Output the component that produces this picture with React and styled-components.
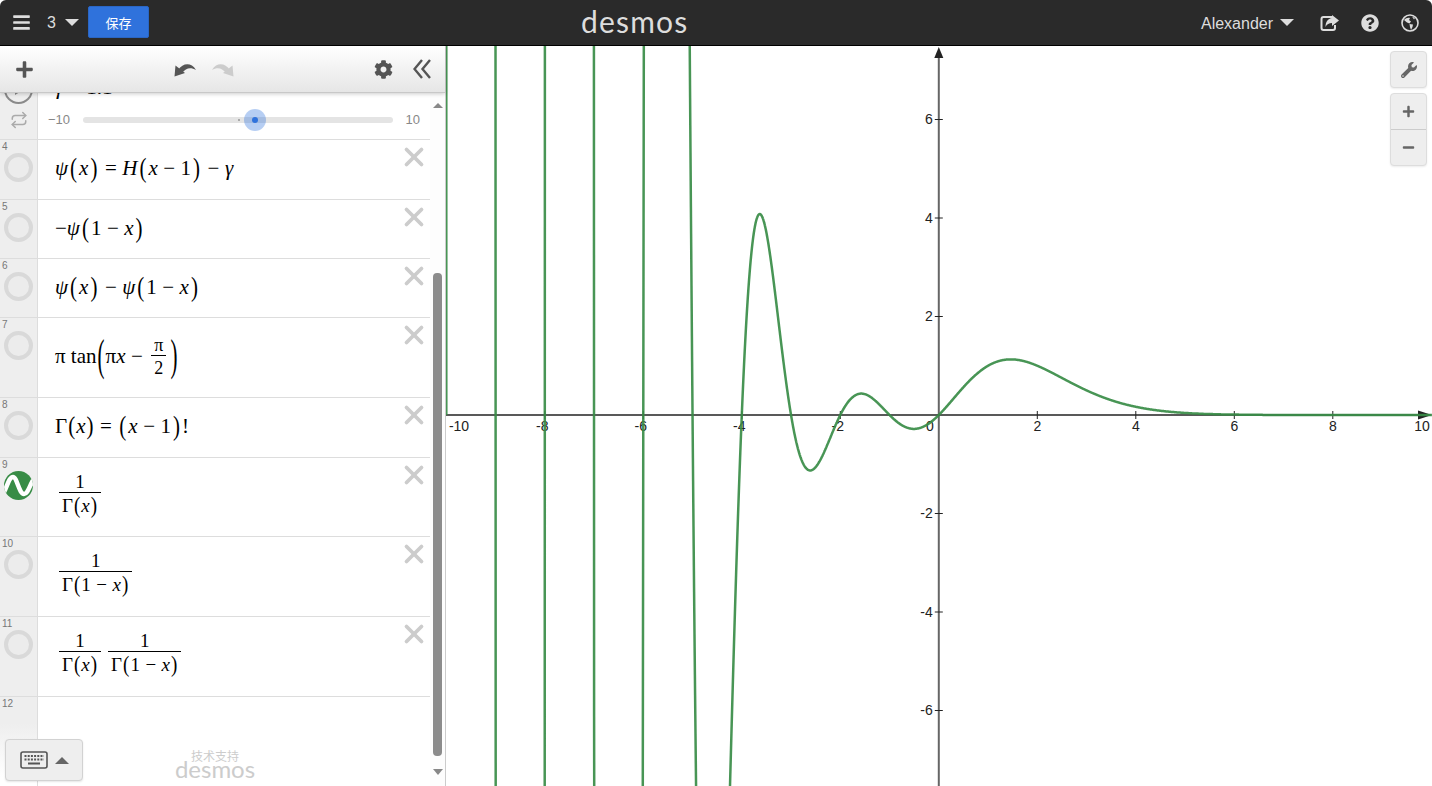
import React from 'react'
import styled, { createGlobalStyle } from 'styled-components'
import { FaBars, FaPlus, FaCog, FaQuestionCircle, FaWrench, FaMinus } from 'react-icons/fa'
import { Repeat, X } from 'lucide-react'

const Global = createGlobalStyle`
html,body{margin:0;padding:0;background:#fff;height:100%;overflow:hidden;}
body{font-family:"Liberation Sans",Arial,sans-serif;}
`

const Page = styled.div`
width:1432px;
height:786px;
display:flex;
flex-direction:column;
overflow:hidden;
`

const Header = styled.header`
height:45px;
flex:none;
background:#2a2a2a;
border-bottom:1px solid #000;
border-radius:6px 6px 0 0;
display:flex;
align-items:center;
color:#ddd;
`

const HeaderLeft = styled.div`
width:581px;
flex:none;
display:flex;
align-items:center;
padding-left:12px;
box-sizing:border-box;
font-size:16px;
`

const Count = styled.span`
margin-left:16px;
`

const Caret = styled.span`
display:inline-block;
width:0;
height:0;
border-left:7px solid transparent;
border-right:7px solid transparent;
border-top:7px solid #ddd;
margin-left:${p => p.$left}px;
`

const CaretUp = styled.span`
display:inline-block;
width:0;
height:0;
border-left:7px solid transparent;
border-right:7px solid transparent;
border-bottom:7px solid #666;
`

const SaveButton = styled.button`
margin:0 0 1px 9px;
width:61px;
height:32px;
border:1px solid #2a66c4;
border-radius:2px;
background:#2f72dc;
color:#fff;
font-size:13px;
font-family:"Liberation Sans","Noto Sans CJK SC",sans-serif;
padding:0;
`

const Logo = styled.span`
font-family:Lato,sans-serif;
font-size:${p => p.$size}px;
line-height:1;
letter-spacing:${p => p.$spacing}px;
color:${p => p.$color};
margin-bottom:${p => p.$lift || 0}px;
`

const HeaderRight = styled.div`
margin-left:auto;
display:flex;
align-items:center;
font-size:16px;
padding-right:13px;
`

const UserName = styled.span`
padding-top:2px;
`

const HeaderIcon = styled.span`
display:flex;
margin-left:${p => p.$left}px;
`

const Main = styled.div`
flex:1;
display:flex;
min-height:0;
`

const Panel = styled.aside`
width:446px;
flex:none;
box-sizing:border-box;
border-right:1px solid #ccc;
display:flex;
flex-direction:column;
position:relative;
`

const Toolbar = styled.div`
height:47px;
flex:none;
box-sizing:border-box;
padding:0 15px;
display:flex;
align-items:center;
background:linear-gradient(#fff,#e6e6e6);
border-bottom:1px solid #c8c8c8;
box-shadow:0 1px 4px rgba(0,0,0,.2);
position:relative;
z-index:2;
color:#555;
`

const ToolIcon = styled.span`
display:flex;
color:${p => p.$color || '#555'};
margin-left:${p => p.$left || 0}px;
`

const Body = styled.div`
flex:1;
display:flex;
min-height:0;
`

const List = styled.div`
width:430px;
flex:none;
overflow:hidden;
display:flex;
flex-direction:column;
`

const Row = styled.div`
height:${p => p.$h}px;
flex:${p => (p.$grow ? '1' : 'none')};
box-sizing:border-box;
display:flex;
border-bottom:${p => (p.$grow ? 'none' : '1px solid #ddd')};
position:relative;
`

const SliderRow = styled(Row)`
margin-top:-33px;
`

const Gutter = styled.div`
width:38px;
flex:none;
box-sizing:border-box;
background:${p => (p.$fade ? 'linear-gradient(#eee 30%,#fff 90%)' : '#eee')};
border-right:1px solid #ddd;
position:relative;
padding:${p => p.$top || 13}px 0 0 4px;
`

const RowNum = styled.span`
position:absolute;
left:2px;
top:1px;
font-size:10px;
color:#777;
`

const Ring = styled.div`
width:29px;
height:29px;
box-sizing:border-box;
border-radius:50%;
border:4px solid #d9d9d9;
background:#ececec;
`

const PlayRing = styled.div`
width:29px;
height:29px;
box-sizing:border-box;
border-radius:50%;
border:2px solid #8a8a8a;
display:flex;
align-items:center;
justify-content:center;
`

const LoopIcon = styled.span`
display:flex;
justify-content:center;
width:29px;
margin-top:7px;
color:#aaa;
`

const Content = styled.div`
flex:1;
display:flex;
align-items:center;
padding-left:${p => p.$left}px;
padding-bottom:2px;
font-family:"Liberation Serif","Times New Roman",serif;
font-size:21px;
color:#000;
white-space:pre;
`

const SliderBody = styled.div`
flex:1;
display:flex;
flex-direction:column;
padding:19px 10px 0 10px;
`

const SliderFormula = styled.div`
padding-left:7px;
height:16px;
font-family:"Liberation Serif",serif;
font-size:21px;
line-height:16px;
`

const SliderLine = styled.div`
display:flex;
align-items:center;
margin-top:17px;
font-size:13px;
color:#888;
gap:13px;
`

const Track = styled.div`
flex:1;
height:6px;
border-radius:3px;
background:#e4e4e4;
position:relative;
`

const TrackZero = styled.span`
position:absolute;
left:155px;
top:2px;
width:2px;
height:2px;
background:#aaa;
`

const Thumb = styled.span`
position:absolute;
left:161px;
top:-8px;
width:22px;
height:22px;
border-radius:50%;
background:rgba(47,114,220,.35);
display:flex;
align-items:center;
justify-content:center;
&::after{
  content:"";
  width:6px;
  height:6px;
  border-radius:50%;
  background:#2f72dc;
}
`

const Delete = styled.span`
position:absolute;
right:1px;
top:2px;
display:flex;
color:#ccc;
`

const V = styled.i`
font-style:italic;
`

const Op = styled.span`
margin:0 5.5px;
`

const TightOp = styled.span`
margin:0 5.5px;
`

const Paren = styled.span`
display:inline-block;
font-weight:400;
transform:scale(1,${p => p.$y || 1.35});
margin:0 ${p => p.$gap || 2}px;
`

const Frac = styled.span`
display:inline-flex;
flex-direction:column;
align-items:center;
vertical-align:middle;
font-size:${p => p.$size || 19}px;
line-height:1;
margin:0 ${p => p.$gap || 0}px ${p => p.$lift || 0}px;
`

const Num = styled.span`
padding:0 3px 1px;
`

const Den = styled.span`
border-top:1px solid #000;
padding:3px 3px 0;
align-self:stretch;
text-align:center;
`

const Scroll = styled.div`
flex:1;
display:flex;
flex-direction:column;
align-items:center;
padding:10px 0 0;
background:#fdfdfd;
`

const ArrowUp = styled.span`
width:0;
height:0;
border-left:5px solid transparent;
border-right:5px solid transparent;
border-bottom:5px solid #888;
`

const ArrowDown = styled.span`
width:0;
height:0;
border-left:5px solid transparent;
border-right:5px solid transparent;
border-top:6px solid #888;
margin-top:13px;
`

const ScrollThumb = styled.div`
width:9px;
height:483px;
margin-top:165px;
border-radius:4px;
background:#8c8c8c;
`

const KeyboardButton = styled.div`
position:absolute;
left:5px;
bottom:5px;
width:78px;
height:42px;
box-sizing:border-box;
background:#eee;
border:1px solid #d2d2d2;
border-radius:4px;
box-shadow:0 1px 2px rgba(0,0,0,.1);
display:flex;
align-items:center;
justify-content:center;
gap:7px;
`

const Powered = styled.div`
position:absolute;
left:175px;
bottom:5px;
width:80px;
display:flex;
flex-direction:column;
align-items:center;
color:#ccc;
`

const PoweredText = styled.span`
font-family:"Noto Sans CJK SC",sans-serif;
font-size:12px;
line-height:13px;
margin-bottom:-5px;
`

const Graph = styled.main`
flex:1;
position:relative;
overflow:hidden;
background:#fff;
`

const Plot = styled.svg`
display:block;
`

const TickLabel = styled.text`
font-family:"Liberation Sans",Arial,sans-serif;
font-size:14px;
fill:#222;
`

const Controls = styled.div`
position:absolute;
right:5px;
top:5px;
display:flex;
flex-direction:column;
gap:5px;
`

const ControlGroup = styled.div`
width:37px;
background:#eee;
border:1px solid #ddd;
border-radius:4px;
box-shadow:0 1px 2px rgba(0,0,0,.08);
display:flex;
flex-direction:column;
box-sizing:border-box;
`

const ControlButton = styled.div`
height:35px;
display:flex;
align-items:center;
justify-content:center;
color:#666;
& + &{
  border-top:1px solid #ccc;
}
`

const OX = 492.8
const OY = 369
const UNIT = 49.25
const W = 986
const H = 740

const LANCZOS = [676.5203681218851, -1259.1392167224028, 771.32342877765313,
  -176.61502916214059, 12.507343278686905, -0.13857109526572012, 9.9843695780195716e-6, 1.5056327351493116e-7]

function gamma(x) {
  if (x < 0.5) return Math.PI / (Math.sin(Math.PI * x) * gamma(1 - x))
  const z = x - 1
  let a = 0.99999999999980993
  LANCZOS.forEach((c, i) => { a += c / (z + i + 1) })
  const t = z + 7.5
  return Math.sqrt(2 * Math.PI) * Math.pow(t, z + 0.5) * Math.exp(-t) * a
}

// 1/gamma(x) from x=-10 on, it starts on the axis so the left edge only goes up
function curvePath() {
  const start = OX - 10 * UNIT
  const pts = [`${start.toFixed(1)} ${OY}`]
  for (let px = start + 0.01; px <= W; px += 0.2) {
    const y = 1 / gamma((px - OX) / UNIT)
    const py = Math.max(-60, Math.min(H + 60, OY - y * UNIT))
    pts.push(`${px.toFixed(1)} ${py.toFixed(1)}`)
  }
  return 'M' + pts.join('L')
}

const xTicks = [-8, -6, -4, -2, 2, 4, 6, 8]
const yTicks = [6, 4, 2, -2, -4, -6]

function Plane() {
  return (
    <Plot width={W} height={H} viewBox={`0 0 ${W} ${H}`}>
      <line x1={OX} y1="8" x2={OX} y2={H} stroke="#666" strokeWidth="2" />
      <line x1="0" y1={OY} x2={W - 8} y2={OY} stroke="#222" strokeWidth="1.5" />
      {xTicks.map(t => (
        <g key={t}>
          <line x1={OX + t * UNIT} x2={OX + t * UNIT} y1={OY - 4} y2={OY + 4} stroke="#222" />
          <TickLabel x={OX + t * UNIT - (t < 0 ? 2.5 : 0)} y={OY + 16} textAnchor="middle">{t}</TickLabel>
        </g>
      ))}
      {yTicks.map(t => (
        <g key={t}>
          <line x1={OX - 4} x2={OX + 4} y1={OY - t * UNIT} y2={OY - t * UNIT} stroke="#222" />
          <TickLabel x={OX - 6} y={OY - t * UNIT + 4.5} textAnchor="end">{t}</TickLabel>
        </g>
      ))}
      <TickLabel x={13} y={OY + 16} textAnchor="middle">-10</TickLabel>
      <TickLabel x={976} y={OY + 16} textAnchor="middle">10</TickLabel>
      <TickLabel x={OX - 9} y={OY + 16} textAnchor="middle">0</TickLabel>
      <path d={`M${OX} 1 L${OX + 4.5} 12 L${OX - 4.5} 12 Z`} fill="#222" />
      <path d={`M${W} ${OY} L${W - 14} ${OY - 4.5} L${W - 14} ${OY + 4.5} Z`} fill="#222" />
      <path d={curvePath()} fill="none" stroke="#388c46" strokeOpacity=".92" strokeWidth="2.5" strokeLinejoin="round" />
    </Plot>
  )
}

const WaveIcon = () => (
  <svg width="29" height="29" viewBox="0 0 29 29">
    <defs>
      <clipPath id="disc"><circle cx="14.5" cy="14.5" r="14.5" /></clipPath>
    </defs>
    <circle cx="14.5" cy="14.5" r="14.5" fill="#388c46" />
    <path d="M0 21 C3 16 5 6 9 6 C13 6 15 23 20 23 C24 23 26 13 30 8" fill="none" stroke="#fff" strokeWidth="4.5" clipPath="url(#disc)" />
  </svg>
)

const KeyboardIcon = () => (
  <svg width="28" height="18" viewBox="0 0 28 18">
    <rect x="1" y="1" width="26" height="16" rx="2" fill="none" stroke="#555" strokeWidth="1.6" />
    <path d="M4.5 5H24M4.5 8.5H24" stroke="#555" strokeWidth="1.8" strokeDasharray="2 1.2" fill="none" />
    <path d="M8 12.5H20" stroke="#555" strokeWidth="2" fill="none" />
  </svg>
)

const UndoIcon = ({ flip }) => (
  <svg width="22" height="15" viewBox="0 0 22 15" transform={flip ? 'scale(-1 1)' : undefined}>
    <path d="M0.5 14.5 L1.5 3.5 L11 11 Z" fill="currentColor" />
    <path d="M4 8 C9 1 17 0 22 8 C17 5 12 5.5 8 11 Z" fill="currentColor" />
  </svg>
)

const DoubleLeft = () => (
  <svg width="18" height="20" viewBox="0 0 18 20">
    <path d="M9 1 L1.5 10 L9 19 M17 1 L9.5 10 L17 19" fill="none" stroke="currentColor" strokeWidth="2.4" />
  </svg>
)

const ShareIcon = () => (
  <svg width="19" height="18" viewBox="0 0 19 18">
    <path d="M12 3 H3.5 Q1.5 3 1.5 5 V14 Q1.5 16 3.5 16 H13 Q15 16 15 14 V11" fill="none" stroke="currentColor" strokeWidth="2" />
    <path d="M12 1 L19 6.5 L12 12 V9 C9 9 7 10 5.5 13 C5.5 8 8 4.5 12 4 Z" fill="currentColor" />
  </svg>
)

const GlobeIcon = () => (
  <svg width="18" height="18" viewBox="0 0 18 18">
    <circle cx="9" cy="9" r="8" fill="none" stroke="currentColor" strokeWidth="1.6" />
    <path d="M3 6 C5 4 7 3.5 9 4 L8 6 L10 7.5 L8.5 9.5 L6 8.5 Z" fill="currentColor" />
    <path d="M8.5 10 L12 10.5 L11.5 13 L10 16 L9 13 Z" fill="currentColor" />
    <path d="M11 2.5 L14 4 L13 5.5 Z" fill="currentColor" />
  </svg>
)

const GammaOfX = () => <>Γ<Paren $y={1.2} $gap={1}>(</Paren><V>x</V><Paren $y={1.2} $gap={1}>)</Paren></>
const GammaOneMinus = () => (
  <>Γ<Paren $y={1.2} $gap={1}>(</Paren>1<TightOp>−</TightOp><V>x</V><Paren $y={1.2} $gap={1}>)</Paren></>
)

const rows = [
  {
    n: 4, h: 60, left: 17,
    math: <><V>ψ</V><Paren>(</Paren><V>x</V><Paren>)</Paren><Op>=</Op><V>H</V><Paren>(</Paren><V>x</V><Op>−</Op>1<Paren>)</Paren><Op>−</Op><V>γ</V></>
  },
  {
    n: 5, h: 59, left: 17,
    math: <>−<V>ψ</V><Paren>(</Paren>1<Op>−</Op><V>x</V><Paren>)</Paren></>
  },
  {
    n: 6, h: 59, left: 17,
    math: <><V>ψ</V><Paren>(</Paren><V>x</V><Paren>)</Paren><Op>−</Op><V>ψ</V><Paren>(</Paren>1<Op>−</Op><V>x</V><Paren>)</Paren></>
  },
  {
    n: 7, h: 80, left: 17,
    math: <>π tan<Paren $y={2.1} $gap={1}>(</Paren>π<V>x</V><Op>−</Op><Frac $size={18} $gap={3}><Num>π</Num><Den>2</Den></Frac><Paren $y={2.1} $gap={1}>)</Paren></>
  },
  {
    n: 8, h: 60, left: 17,
    math: <><GammaOfX /><Op>=</Op><Paren>(</Paren><V>x</V><Op>−</Op>1<Paren>)</Paren>!</>
  },
  {
    n: 9, h: 79, left: 21, wave: true,
    math: <Frac $lift={6}><Num>1</Num><Den><GammaOfX /></Den></Frac>
  },
  {
    n: 10, h: 80, left: 21,
    math: <Frac $lift={6}><Num>1</Num><Den><GammaOneMinus /></Den></Frac>
  },
  {
    n: 11, h: 80, left: 21,
    math: <><Frac $lift={6}><Num>1</Num><Den><GammaOfX /></Den></Frac><Frac $lift={6} $gap={7}><Num>1</Num><Den><GammaOneMinus /></Den></Frac></>
  }
]

export default function App() {
  return (
    <Page>
      <Global />
      <Header>
        <HeaderLeft>
          <FaBars size={19} color="#ddd" />
          <Count>3</Count>
          <Caret $left={9} />
          <SaveButton>保存</SaveButton>
        </HeaderLeft>
        <Logo $size={30} $spacing={1.2} $color="#ddd" $lift={3}>desmos</Logo>
        <HeaderRight>
          <UserName>Alexander</UserName>
          <Caret $left={7} />
          <HeaderIcon $left={26}><ShareIcon /></HeaderIcon>
          <HeaderIcon $left={22}><FaQuestionCircle size={18} /></HeaderIcon>
          <HeaderIcon $left={22}><GlobeIcon /></HeaderIcon>
        </HeaderRight>
      </Header>
      <Main>
        <Panel>
          <Toolbar>
            <ToolIcon><FaPlus size={19} /></ToolIcon>
            <ToolIcon $left={140}><UndoIcon /></ToolIcon>
            <ToolIcon $left={16} $color="#ccc"><UndoIcon flip /></ToolIcon>
            <ToolIcon $left={140}><FaCog size={19} /></ToolIcon>
            <ToolIcon $left={20}><DoubleLeft /></ToolIcon>
          </Toolbar>
          <Body>
            <List>
              <SliderRow $h={80}>
                <Gutter $top={15}>
                  <PlayRing><svg width="10" height="12" viewBox="0 0 10 12"><path d="M1 1L9 6L1 11Z" fill="#8a8a8a" /></svg></PlayRing>
                  <LoopIcon><Repeat size={18} strokeWidth={2} /></LoopIcon>
                </Gutter>
                <SliderBody>
                  <SliderFormula><V>γ</V><Op>=</Op>1.1</SliderFormula>
                  <SliderLine>
                    <span>−10</span>
                    <Track><TrackZero /><Thumb /></Track>
                    <span>10</span>
                  </SliderLine>
                </SliderBody>
              </SliderRow>
              {rows.map(r => (
                <Row key={r.n} $h={r.h}>
                  <Gutter>
                    <RowNum>{r.n}</RowNum>
                    {r.wave ? <WaveIcon /> : <Ring />}
                  </Gutter>
                  <Content $left={r.left}>{r.math}</Content>
                  <Delete><X size={30} strokeWidth={3} /></Delete>
                </Row>
              ))}
              <Row $grow>
                <Gutter $fade><RowNum>12</RowNum></Gutter>
              </Row>
            </List>
            <Scroll>
              <ArrowUp />
              <ScrollThumb />
              <ArrowDown />
            </Scroll>
          </Body>
          <KeyboardButton>
            <KeyboardIcon />
            <CaretUp />
          </KeyboardButton>
          <Powered>
            <PoweredText>技术支持</PoweredText>
            <Logo $size={24} $spacing={0} $color="#ccc">desmos</Logo>
          </Powered>
        </Panel>
        <Graph>
          <Plane />
          <Controls>
            <ControlGroup><ControlButton><FaWrench size={16} /></ControlButton></ControlGroup>
            <ControlGroup>
              <ControlButton><FaPlus size={13} /></ControlButton>
              <ControlButton><FaMinus size={13} /></ControlButton>
            </ControlGroup>
          </Controls>
        </Graph>
      </Main>
    </Page>
  )
}
